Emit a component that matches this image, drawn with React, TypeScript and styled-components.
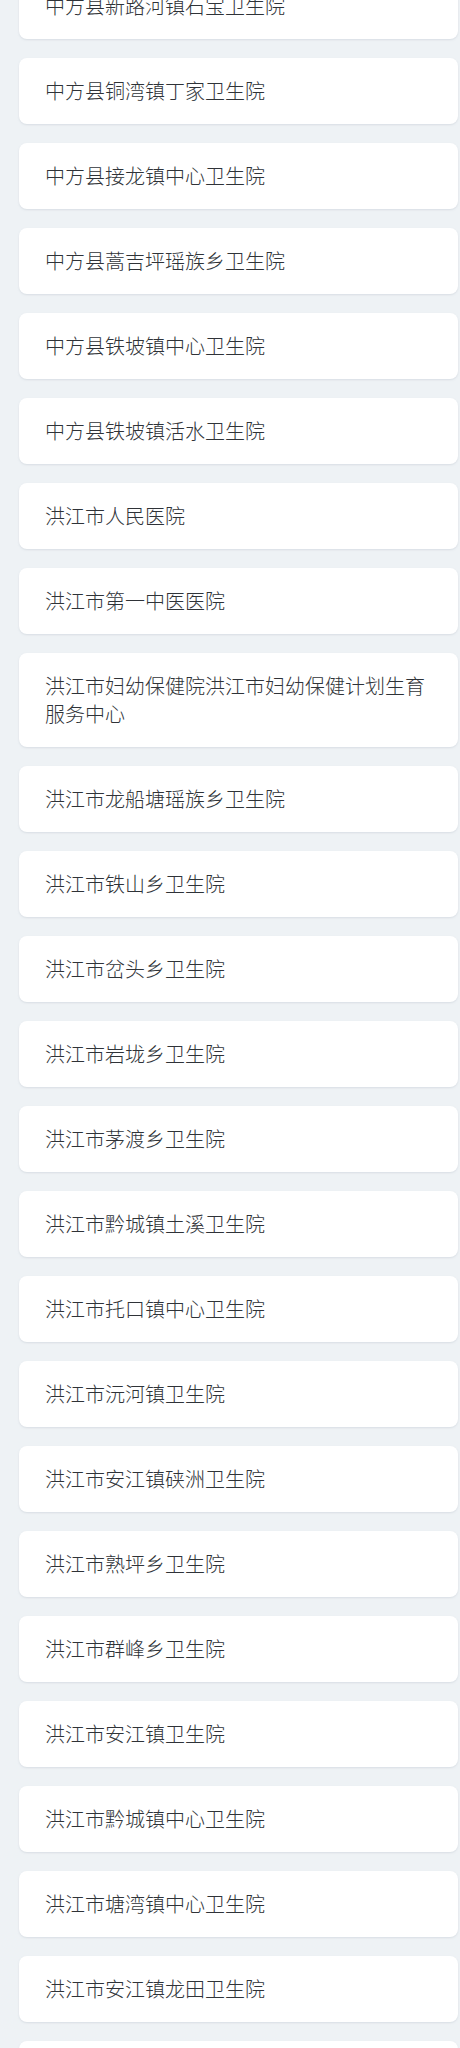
import React from "react";
import styled, { createGlobalStyle } from "styled-components";

const GlobalStyle = createGlobalStyle`
  html, body {
    margin: 0;
    padding: 0;
    background: #eef2f5;
  }
  body {
    font-family: "Noto Sans CJK SC", "Noto Sans", sans-serif;
  }
`;

const Page = styled.div`
  background: #eef2f5;
  min-height: 2048px;
  overflow: hidden;
`;

const List = styled.ul`
  list-style: none;
  margin: -27px 2px 0 19px;
  padding: 0 0 40px;
  display: flex;
  flex-direction: column;
  gap: 19px;
`;

const Card = styled.li`
  background: #ffffff;
  border-radius: 8px;
  padding: 19px 26px 19px 26px;
  box-shadow: 0 1px 2px rgba(150, 165, 180, 0.25);
  font-size: 20px;
  font-weight: 300;
  line-height: 28px;
  color: #2f3338;
`;

const names = [
  "中方县新路河镇石宝卫生院",
  "中方县铜湾镇丁家卫生院",
  "中方县接龙镇中心卫生院",
  "中方县蒿吉坪瑶族乡卫生院",
  "中方县铁坡镇中心卫生院",
  "中方县铁坡镇活水卫生院",
  "洪江市人民医院",
  "洪江市第一中医医院",
  "洪江市妇幼保健院洪江市妇幼保健计划生育服务中心",
  "洪江市龙船塘瑶族乡卫生院",
  "洪江市铁山乡卫生院",
  "洪江市岔头乡卫生院",
  "洪江市岩垅乡卫生院",
  "洪江市茅渡乡卫生院",
  "洪江市黔城镇土溪卫生院",
  "洪江市托口镇中心卫生院",
  "洪江市沅河镇卫生院",
  "洪江市安江镇硖洲卫生院",
  "洪江市熟坪乡卫生院",
  "洪江市群峰乡卫生院",
  "洪江市安江镇卫生院",
  "洪江市黔城镇中心卫生院",
  "洪江市塘湾镇中心卫生院",
  "洪江市安江镇龙田卫生院",
  "洪江市雪峰镇卫生院",
];

export default function App() {
  return (
    <Page>
      <GlobalStyle />
      <List>
        {names.map((n, i) => (
          <Card key={i}>{n}</Card>
        ))}
      </List>
    </Page>
  );
}
